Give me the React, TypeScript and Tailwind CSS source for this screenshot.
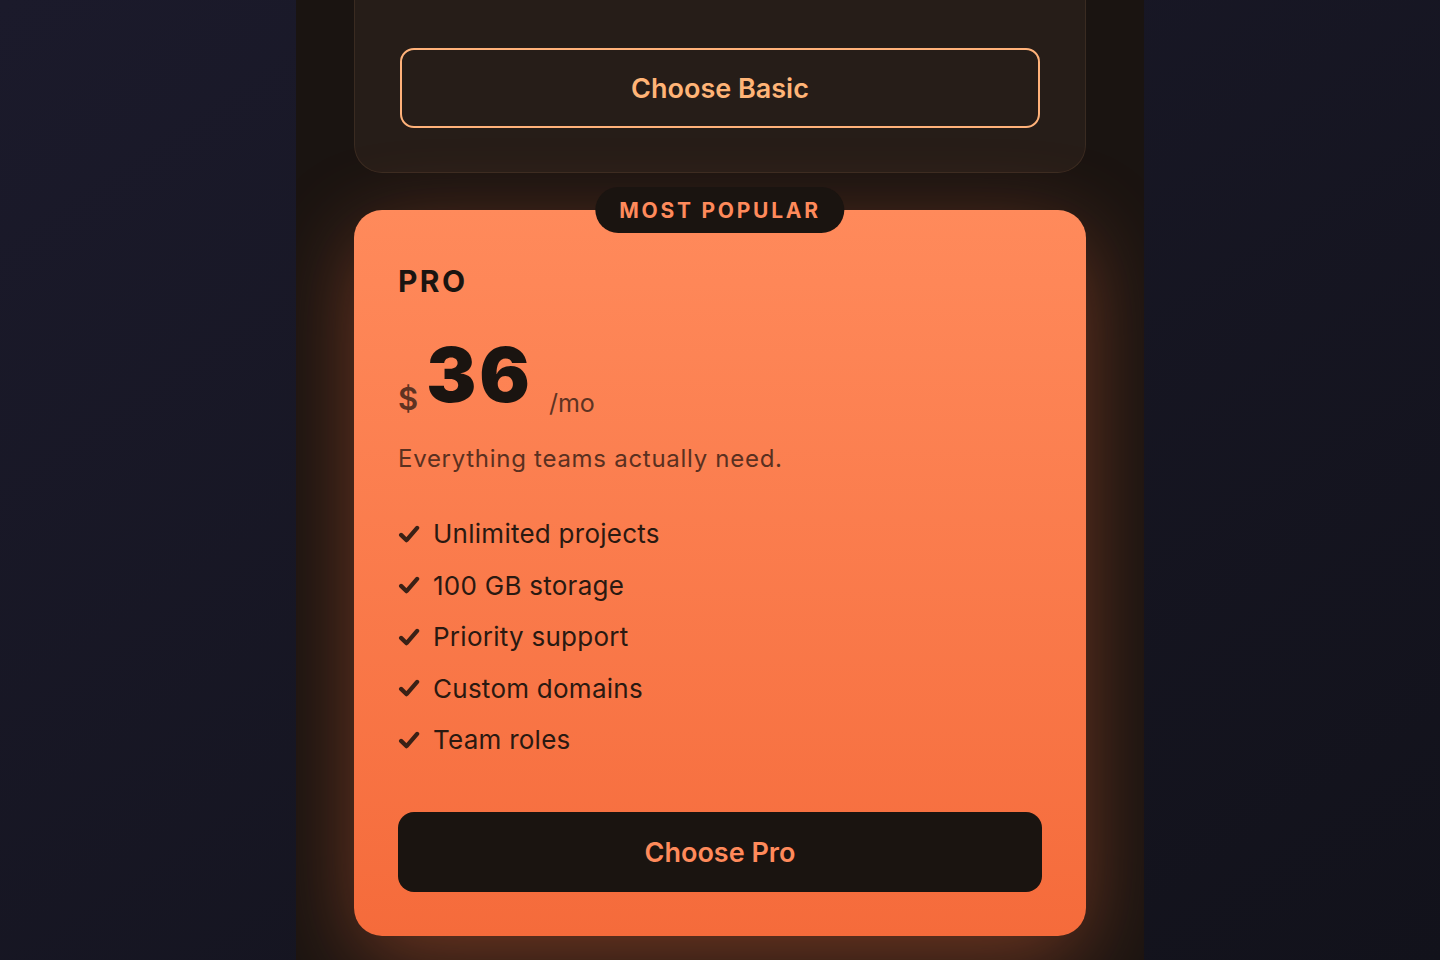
const features = ['Unlimited projects', '100 GB storage', 'Priority support', 'Custom domains', 'Team roles'];

function CheckMark() {
    return (
        <svg viewBox="0 0 20 20" className="w-[22px] h-[22px] shrink-0 text-[#3a2116]" fill="none">
            <path d="M2.8 10.8 L7.8 15.6 L17.4 4.4" stroke="currentColor" strokeWidth="3.8" strokeLinecap="round" strokeLinejoin="round" />
        </svg>
    );
}

export default function App() {
    return (
        <div className="h-[960px] overflow-hidden flex justify-center bg-gradient-to-br from-[#1b1a2b] to-[#12121b] font-['Inter',sans-serif]">
            {/* 가운데 컬럼 */}
            <div className="w-[848px] h-full overflow-hidden bg-[#1a1411] px-[58px]">
                {/* Basic 카드 (위쪽은 스크롤로 잘림) */}
                <div className="rounded-b-[28px] border border-t-0 border-[#3a2b21] bg-[#261d18] px-[45px] pt-12 pb-11">
                    <button className="w-full h-20 pt-[2px] rounded-[14px] border-2 border-[#ffb27a] text-[#ffb477] text-[27px] font-semibold">
                        Choose Basic
                    </button>
                </div>

                {/* Pro 카드 */}
                <div className="relative mt-[37px]">
                    <div className="absolute left-1/2 -translate-x-1/2 -top-[23px] h-[46px] px-6 rounded-full bg-[#1a1410] flex items-center">
                        <span className="text-[21px] font-bold tracking-[0.13em] text-[#ff8a5b] leading-none">MOST POPULAR</span>
                    </div>
                    <div className="rounded-[28px] bg-gradient-to-b from-[#ff8a5b] to-[#f56b3b] px-11 pt-11 pb-11 shadow-[0_24px_90px_-4px_rgba(246,110,60,0.42)]">
                        <h2 className="mt-3 text-[30px] leading-none font-bold tracking-[0.08em] text-[#1a1410]">PRO</h2>

                        <div className="mt-[41px] flex items-end">
                            <span className="text-[31px] leading-none font-semibold text-[#5e3322] -mb-[2px]">$</span>
                            <span className="ml-2 text-[75px] leading-none font-black tracking-[0.04em] text-[#1a1410]">36</span>
                            <span className="ml-4 text-[25px] leading-none text-[#5e3322] -mb-[4px]">/mo</span>
                        </div>

                        <p className="mt-[35px] text-[24px] leading-none tracking-[0.03em] text-[#5a3020]">Everything teams actually need.</p>

                        <ul className="mt-[37px]">
                            {features.map(f => (
                                <li key={f} className="flex items-center gap-[13px] text-[26px] leading-[51.5px] tracking-[0.01em] text-[#2a1911]">
                                    <CheckMark />
                                    {f}
                                </li>
                            ))}
                        </ul>

                        <button className="mt-[46px] w-full h-20 pt-[3px] rounded-2xl bg-[#1a1410] text-[#ff8a5b] text-[27px] font-semibold">
                            Choose Pro
                        </button>
                    </div>
                </div>
            </div>
        </div>
    );
}
